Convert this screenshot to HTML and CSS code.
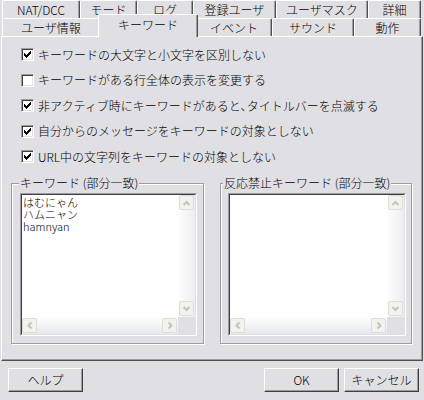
FILE: index.html
```html
<!DOCTYPE html>
<html lang="ja">
<head>
<meta charset="utf-8">
<title>キーワード</title>
<link rel="stylesheet" href="styles.css">
</head>
<body>
<div class="dialog">
  <div class="tabs">
    <div class="tab-row">
      <div class="tab w78">NAT/DCC</div>
      <div class="tab w57">モード</div>
      <div class="tab w56">ログ</div>
      <div class="tab w83">登録ユーザ</div>
      <div class="tab w92">ユーザマスク</div>
      <div class="tab w53">詳細</div>
    </div>
    <div class="tab-row">
      <div class="tab w98">ユーザ情報</div>
      <div class="tab w96 selected">キーワード</div>
      <div class="tab w76">イベント</div>
      <div class="tab w82">サウンド</div>
      <div class="tab w67">動作</div>
    </div>
  </div>

  <div class="panel">
    <div class="checks">
      <div class="check"><span class="box"><svg class="tick" width="7" height="7" viewBox="0 0 7 7"><path d="M6 0h1v1h-1zM5 1h2v1h-2zM0 2h1v1h-1zM4 2h3v1h-3zM0 3h2v1h-2zM3 3h3v1h-3zM0 4h5v1h-5zM1 5h3v1h-3zM2 6h1v1h-1z"/></svg></span><span>キーワードの大文字と小文字を区別しない</span></div>
      <div class="check"><span class="box"></span><span>キーワードがある行全体の表示を変更する</span></div>
      <div class="check"><span class="box"><svg class="tick" width="7" height="7" viewBox="0 0 7 7"><path d="M6 0h1v1h-1zM5 1h2v1h-2zM0 2h1v1h-1zM4 2h3v1h-3zM0 3h2v1h-2zM3 3h3v1h-3zM0 4h5v1h-5zM1 5h3v1h-3zM2 6h1v1h-1z"/></svg></span><span>非アクティブ時にキーワードがあると､タイトルバーを点滅する</span></div>
      <div class="check"><span class="box"><svg class="tick" width="7" height="7" viewBox="0 0 7 7"><path d="M6 0h1v1h-1zM5 1h2v1h-2zM0 2h1v1h-1zM4 2h3v1h-3zM0 3h2v1h-2zM3 3h3v1h-3zM0 4h5v1h-5zM1 5h3v1h-3zM2 6h1v1h-1z"/></svg></span><span>自分からのメッセージをキーワードの対象としない</span></div>
      <div class="check"><span class="box"><svg class="tick" width="7" height="7" viewBox="0 0 7 7"><path d="M6 0h1v1h-1zM5 1h2v1h-2zM0 2h1v1h-1zM4 2h3v1h-3zM0 3h2v1h-2zM3 3h3v1h-3zM0 4h5v1h-5zM1 5h3v1h-3zM2 6h1v1h-1z"/></svg></span><span>URL中の文字列をキーワードの対象としない</span></div>
    </div>

    <div class="groups">
      <div class="group g-left">
        <span class="legend">キーワード (部分一致)</span>
        <div class="list">
          <div class="list-inner">
            <div class="items">
              <div class="item">はむにゃん</div>
              <div class="item">ハムニャン</div>
              <div class="item">hamnyan</div>
            </div>
            <div class="vscroll">
              <div class="sb-btn"><svg width="9" height="6" viewBox="0 0 9 6"><path d="M1.5 5L4.5 2L7.5 5"/></svg></div>
              <div class="sb-track"></div>
              <div class="sb-btn"><svg width="9" height="6" viewBox="0 0 9 6"><path d="M1.5 1L4.5 4L7.5 1"/></svg></div>
            </div>
            <div class="hscroll">
              <div class="sb-btn"><svg width="6" height="9" viewBox="0 0 6 9"><path d="M4.5 1.5L1.5 4.5L4.5 7.5"/></svg></div>
              <div class="sb-track"></div>
              <div class="sb-btn"><svg width="6" height="9" viewBox="0 0 6 9"><path d="M1.5 1.5L4.5 4.5L1.5 7.5"/></svg></div>
            </div>
            <div class="corner"></div>
          </div>
        </div>
      </div>

      <div class="group g-right">
        <span class="legend">反応禁止キーワード (部分一致)</span>
        <div class="list">
          <div class="list-inner">
            <div class="items"></div>
            <div class="vscroll">
              <div class="sb-btn"><svg width="9" height="6" viewBox="0 0 9 6"><path d="M1.5 5L4.5 2L7.5 5"/></svg></div>
              <div class="sb-track"></div>
              <div class="sb-btn"><svg width="9" height="6" viewBox="0 0 9 6"><path d="M1.5 1L4.5 4L7.5 1"/></svg></div>
            </div>
            <div class="hscroll">
              <div class="sb-btn"><svg width="6" height="9" viewBox="0 0 6 9"><path d="M4.5 1.5L1.5 4.5L4.5 7.5"/></svg></div>
              <div class="sb-track"></div>
              <div class="sb-btn"><svg width="6" height="9" viewBox="0 0 6 9"><path d="M1.5 1.5L4.5 4.5L1.5 7.5"/></svg></div>
            </div>
            <div class="corner"></div>
          </div>
        </div>
      </div>
    </div>
  </div>

  <div class="footer">
    <div class="btn">ヘルプ</div>
    <div class="spacer"></div>
    <div class="btn">OK</div>
    <div class="btn">キャンセル</div>
  </div>
</div>
</body>
</html>
```
FILE: styles.css
```css
* { box-sizing: border-box; }
html, body { margin: 0; padding: 0; }
body {
  width: 424px;
  height: 400px;
  overflow: hidden;
  background: #e0dfe3;
  color: #000;
  font-family: "Noto Sans CJK JP", "Noto Sans", sans-serif;
  font-size: 12px;
  font-weight: 300;
  line-height: 14px;
}
.dialog { width: 424px; height: 400px; }

/* tabs */
.tabs { height: 36px; padding-left: 2px; }
.tab-row { display: flex; height: 18px; }
.tab {
  flex: none;
  height: 18px;
  display: flex;
  align-items: center;
  justify-content: center;
  white-space: nowrap;
  background: #e0dfe3;
  border-top: 1px solid #fff;
  border-left: 1px solid #fff;
  border-right: 1px solid #505050;
  box-shadow: inset -1px 0 #9d9da1;
  border-radius: 2px 2px 0 0;
}
.w53 { width: 53px; }
.w56 { width: 56px; }
.w57 { width: 57px; }
.w67 { width: 67px; }
.w76 { width: 76px; }
.w78 { width: 78px; }
.w82 { width: 82px; }
.w83 { width: 83px; }
.w92 { width: 92px; }
.w96 { width: 96px; }
.w98 { width: 98px; }
.tab.selected {
  position: relative;
  z-index: 1;
  width: 100px;
  height: 23px;
  margin: -4px -2px 0;
  padding-bottom: 2px;
}

/* panel */
.panel {
  width: 422px;
  height: 325px;
  margin-left: 1px;
  border-top: 1px solid #fff;
  border-left: 1px solid #fff;
  border-right: 1px solid #505050;
  border-bottom: 1px solid #505050;
  box-shadow: inset -1px -1px #9d9da1;
}
.checks { height: 146px; padding: 5px 0 0 19px; }
.check {
  display: flex;
  align-items: center;
  gap: 4px;
  height: 25.5px;
  white-space: nowrap;
}
.box {
  flex: none;
  width: 13px;
  height: 13px;
  display: flex;
  align-items: center;
  justify-content: center;
  background: #fff;
  border: 1px solid;
  border-color: #9d9da1 #fff #fff #9d9da1;
  box-shadow: inset 1px 1px #404040, inset -1px -1px #e0dfe3;
}
.tick { display: block; fill: #000; shape-rendering: crispEdges; }

/* group boxes */
.groups { display: flex; gap: 16px; padding-left: 9px; }
.group {
  position: relative;
  height: 161px;
  border: 1px solid #9d9da1;
  box-shadow: 1px 1px 0 #fff, inset 1px 1px 0 #fff;
}
.g-left { width: 193px; padding: 9px 6px 7px 8px; }
.g-right { width: 192px; padding: 9px 5px 7px 7px; }
.legend {
  position: absolute;
  top: -8px;
  left: 7px;
  padding: 0 1px;
  background: #e0dfe3;
  white-space: nowrap;
}
.g-right .legend { left: 2px; }

.list {
  height: 100%;
  border: 1px solid;
  border-color: #9d9da1 #fff #fff #9d9da1;
}
.list-inner {
  height: 100%;
  border: 1px solid;
  border-color: #404040 #e0dfe3 #e0dfe3 #404040;
  background: #fff;
  display: grid;
  grid-template-columns: 1fr 17px;
  grid-template-rows: 1fr 17px;
}
.items { padding: 1px 0 0 1px; white-space: nowrap; }
.item { height: 12px; font-size: 11px; line-height: 12px; }

.vscroll {
  display: flex;
  flex-direction: column;
  background: linear-gradient(to right, #fdfdfc, #eeedf0);
}
.hscroll {
  display: flex;
  background: linear-gradient(to bottom, #fefefe, #e6e8f0);
}
.sb-track { flex: 1; }
.sb-btn {
  flex: none;
  width: 15px;
  height: 15px;
  margin: 1px;
  display: flex;
  align-items: center;
  justify-content: center;
  background: #f3f2ee;
  border: 1px solid #dddcd5;
  border-radius: 2px;
}
.vscroll .sb-btn:first-child { margin-top: 0; }
.hscroll .sb-btn:first-child { margin-left: 0; }
.sb-btn svg { display: block; fill: none; stroke: #c3c2bb; stroke-width: 2; }
.corner { background: #e0dfe3; }

/* footer buttons */
.footer { display: flex; gap: 5px; padding: 7px 5px 0 8px; }
.spacer { flex: 1; }
.btn {
  width: 75px;
  height: 24px;
  display: flex;
  align-items: center;
  justify-content: center;
  border: 1px solid;
  border-color: #fff #404040 #404040 #fff;
  box-shadow: inset -1px -1px #9d9da1;
}
```
